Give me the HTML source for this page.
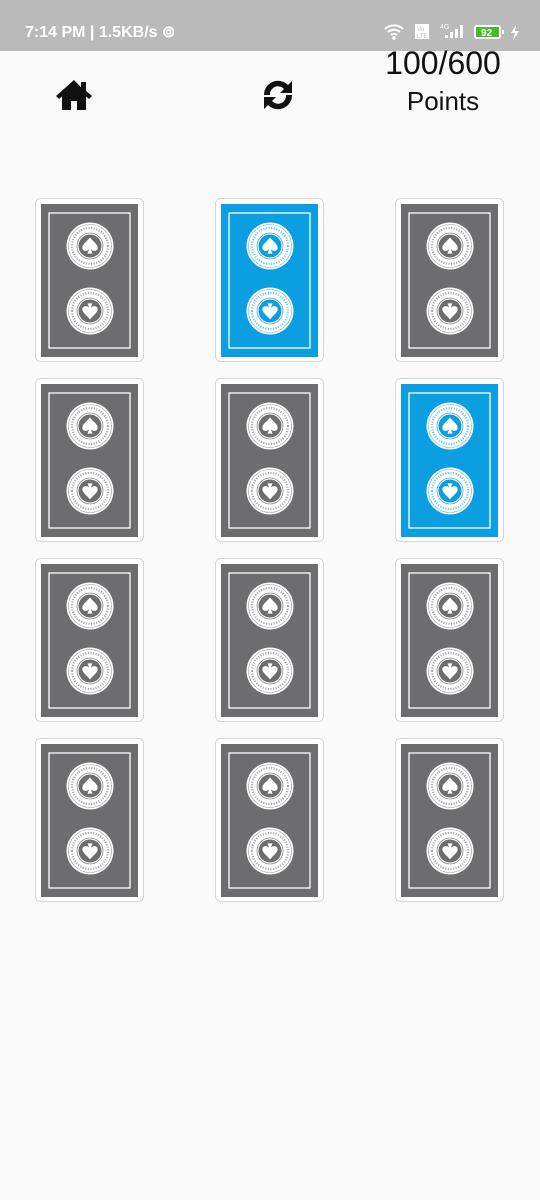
<!DOCTYPE html>
<html><head><meta charset="utf-8"><style>
body{margin:0;width:540px;height:1200px;background:#fafafa;position:relative;overflow:hidden;font-family:"Liberation Sans",sans-serif}
.sb{position:absolute;left:0;top:0;width:540px;height:51px;background:#bababa;color:#fff}
.sb .t{position:absolute;left:25px;top:22px;font-size:16px;font-weight:bold}
.card{position:absolute;width:109px;height:164px}
.pts{position:absolute;left:370px;top:44px;width:146px;text-align:center;color:#111}
</style></head><body>
<div class="sb"><span class="t">7:14 PM | 1.5KB/s ⊚</span>
<svg style="position:absolute;left:383px;top:22px" width="145" height="20" viewBox="0 0 145 20">
<path d="M2 7a13 13 0 0 1 18 0M5 10a9 9 0 0 1 12 0M8 13a4.5 4.5 0 0 1 6 0" stroke="#fff" stroke-width="2" fill="none"/><circle cx="11" cy="16" r="1.8" fill="#fff"/>
<rect x="32" y="2" width="14" height="15" fill="#fff"/><text x="34" y="9" font-size="6" fill="#bababa">Vo</text><text x="34" y="16" font-size="6" fill="#bababa">LTE</text>
<text x="57" y="7" font-size="7" fill="#fff">4G</text>
<path d="M62 16h3v-3h-3zM67 16h3v-6h-3zM72 16h3v-9h-3zM77 16h3v-13h-3z" fill="#fff"/>
<rect x="91" y="3" width="27" height="14" rx="3" fill="#fff"/><rect x="93" y="5" width="23" height="10" fill="#4cbb2a"/><text x="98" y="14" font-size="10" font-weight="bold" fill="#fff">92</text><rect x="119" y="8" width="2" height="4" fill="#fff"/>
<path d="M133 3l-5 8h4l-2 7 6-9h-4z" fill="#fff"/></svg></div>

<svg style="position:absolute;left:55px;top:79px" width="38" height="32" viewBox="0 0 38 32"><path d="M19 1L1 17l3 3 3-2.5V31h9v-9h6v9h9V17.5l3 2.5 3-3-6-5.3V3h-5v5.2z" fill="#111"/></svg>
<svg style="position:absolute;left:260px;top:78px" width="36" height="34" viewBox="0 0 36 34"><path d="M4 17A14 14 0 0 1 28 7l4-4v12H20l4-4A8 8 0 0 0 10 17z" fill="#111"/><path d="M32 17A14 14 0 0 1 8 27l-4 4V19h12l-4 4A8 8 0 0 0 26 17z" fill="#111"/></svg>
<div class="pts"><div style="font-size:32px;line-height:38px">100/600</div><div style="font-size:26px;line-height:30px;margin-top:4px">Points</div></div>

<svg width="0" height="0" style="position:absolute"><defs>
<path id="sp" d="M0-10C-4-5-9-2-9 2c0 4 5 5 8 2L-3 9h6L1 4c3 3 8 2 8-2 0-4-5-7-9-12z"/>
</defs></svg>

<div id="g"></div>
<script>
var cols=[35,215,395],rows=[198,378,558,738],blue={"0,1":1,"1,2":1},h="";
function med(cy,col,rot){return '<g transform="translate(55 '+cy+') rotate('+rot+')"><circle r="23.5" fill="#fff"/><circle r="21.5" fill="none" stroke="'+col+'" stroke-width=".6" opacity=".7"/><circle r="18" fill="none" stroke="'+col+'" stroke-width="2.2" stroke-dasharray="1.2 1.4" opacity=".55"/><circle r="13" fill="#fff" stroke="'+col+'" stroke-width=".8" opacity=".8"/><circle r="11.5" fill="'+col+'"/><use href="#sp" fill="#fff" transform="scale(.85)"/></g>';}
for(var r=0;r<4;r++)for(var c=0;c<3;c++){var col=blue[r+","+c]?"#0b9ee0":"#6d6d6f";
h+='<svg class="card" style="left:'+cols[c]+'px;top:'+rows[r]+'px" viewBox="0 0 109 164"><rect x=".5" y=".5" width="108" height="163" rx="5" fill="#fff" stroke="#d6d6d6"/><rect x="6" y="6" width="97" height="153" fill="'+col+'"/><rect x="14" y="15" width="81" height="135" fill="none" stroke="#fff" stroke-width="1.3"/>'+med(48,col,0)+med(113,col,180)+'</svg>';}
document.getElementById("g").innerHTML=h;
</script>
</body></html>
